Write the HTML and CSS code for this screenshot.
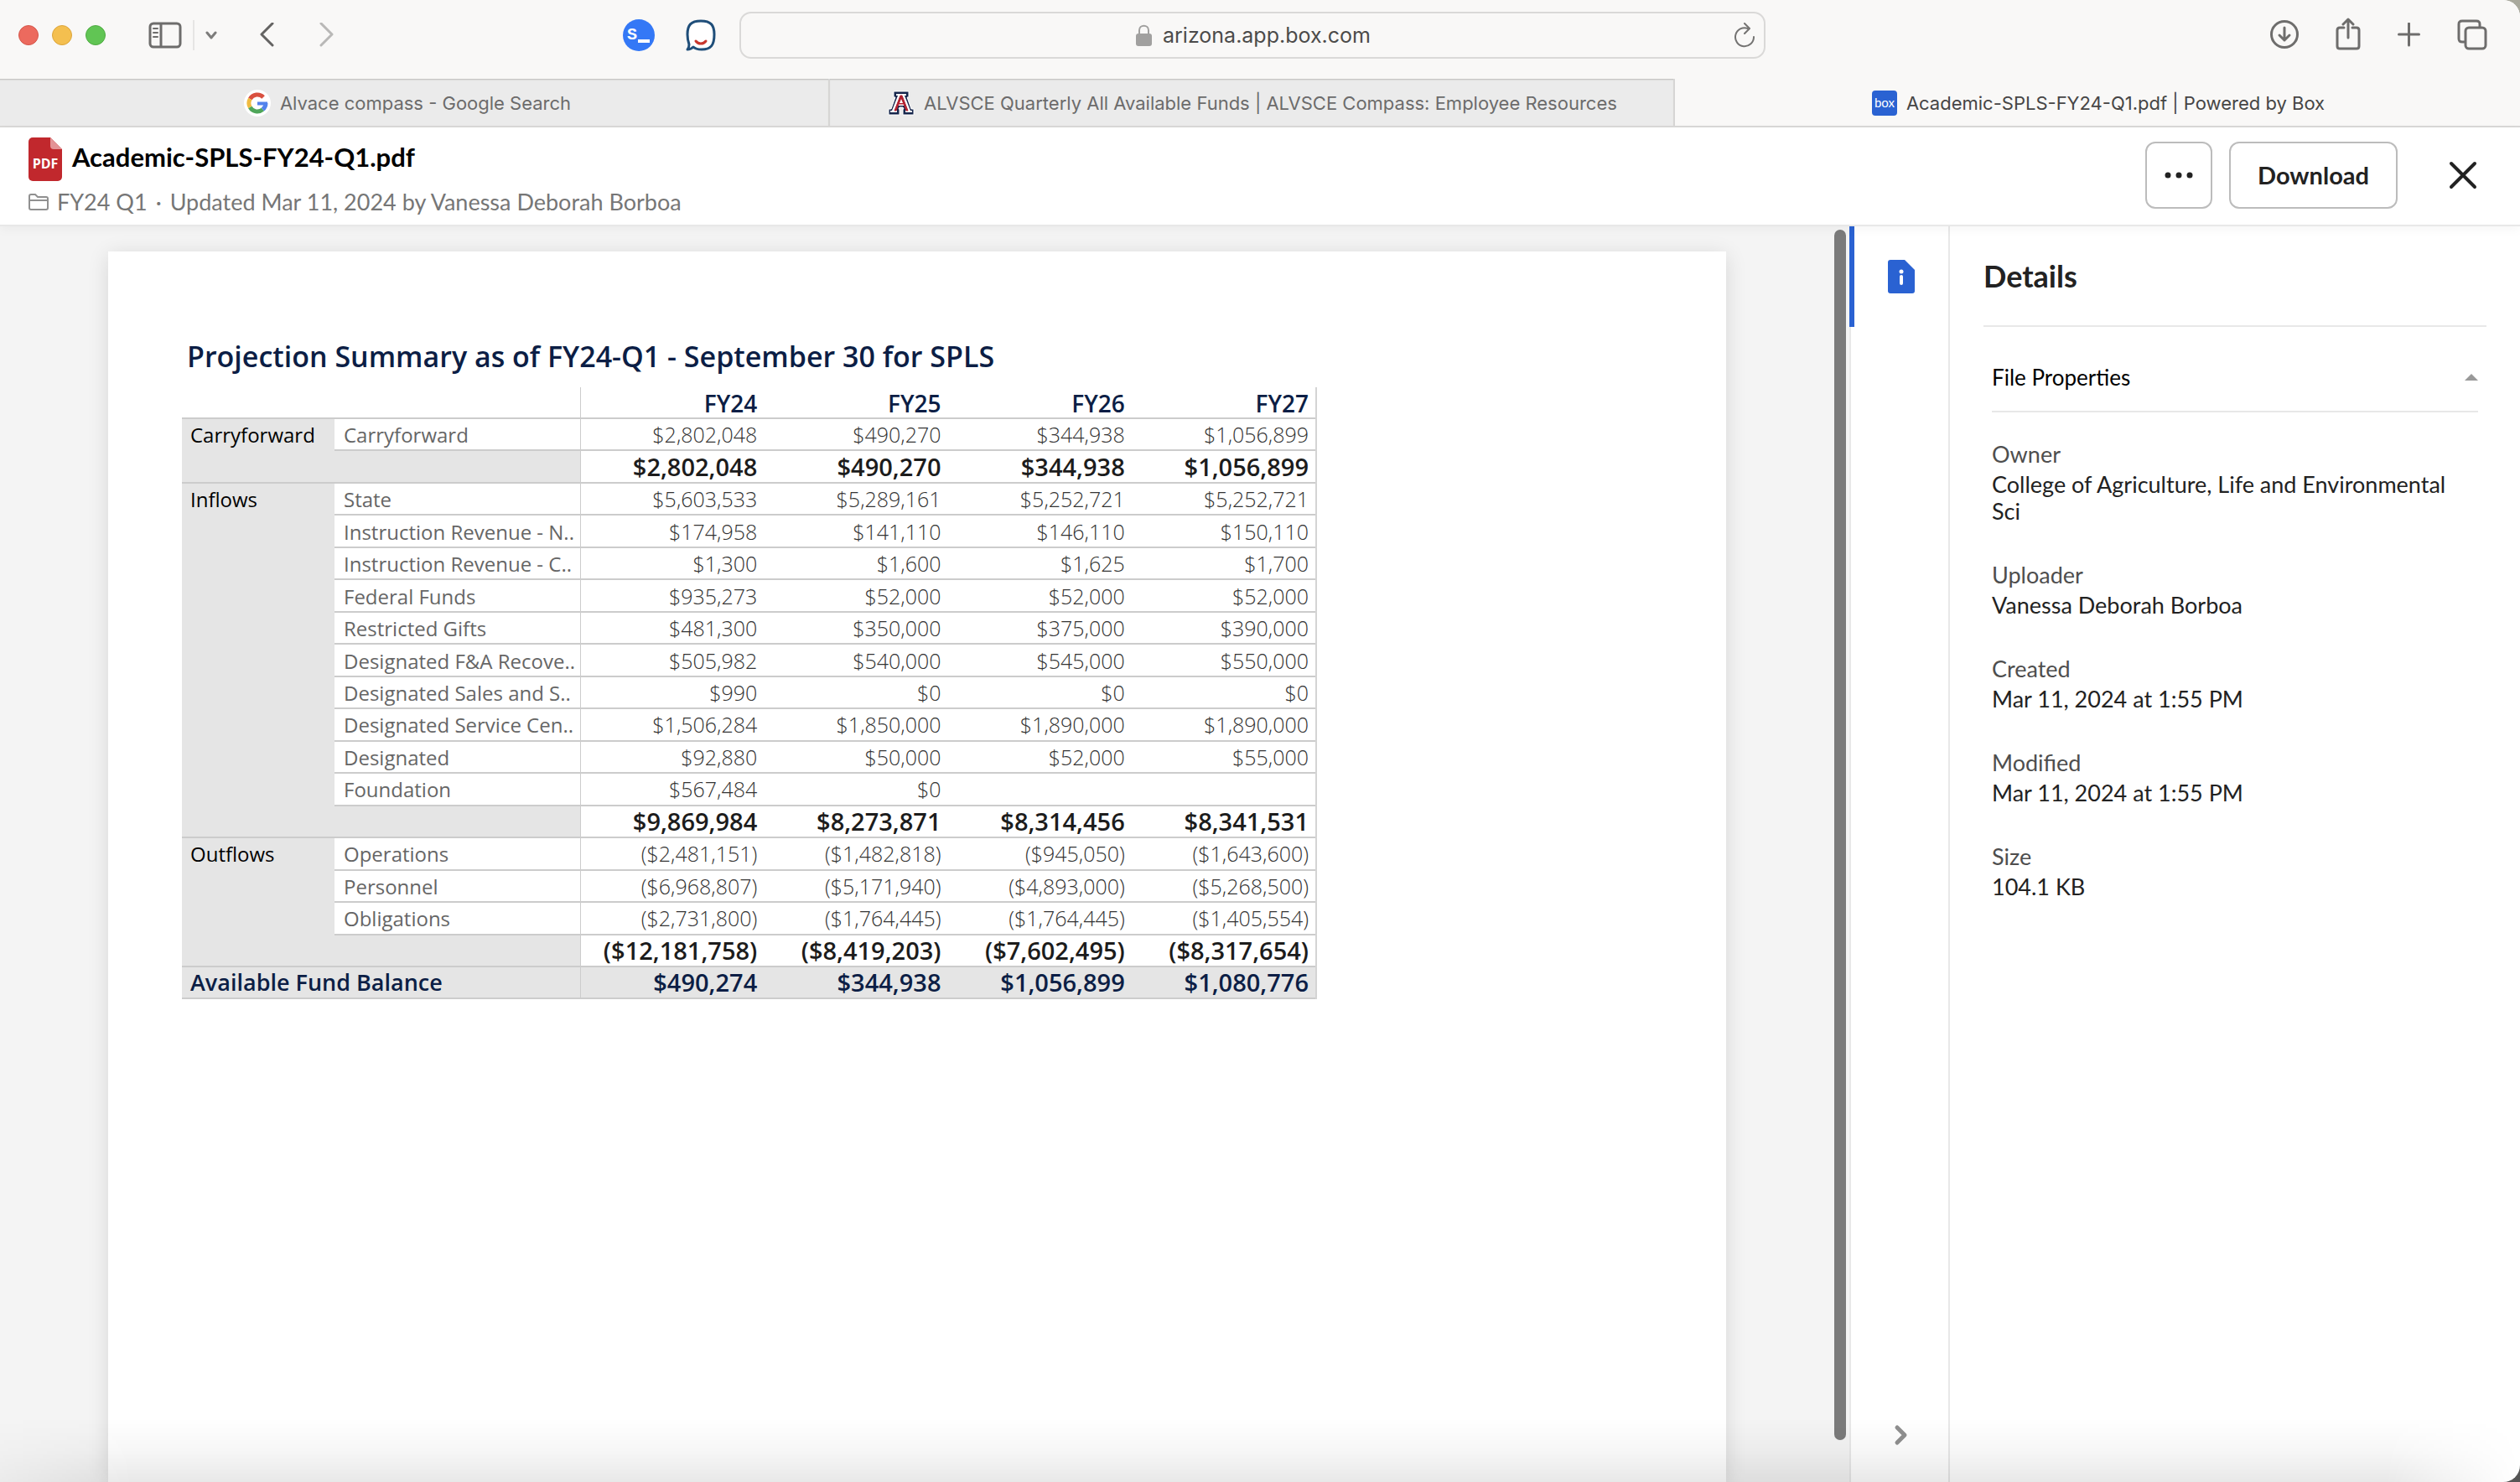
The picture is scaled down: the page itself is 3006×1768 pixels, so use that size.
FILE: index.html
```html
<!DOCTYPE html>
<html lang="en">
<head>
<meta charset="utf-8">
<title>Academic-SPLS-FY24-Q1.pdf | Powered by Box</title>
<link rel="stylesheet" href="styles.css">
</head>
<body>
<div class="window">
  <div class="toolbar">
    <div class="tools tools-left">
      <div class="lights"><span class="light red"></span><span class="light yellow"></span><span class="light green"></span></div>
      <button class="icon-btn sidebar-btn" aria-label="Show sidebar"><svg width="40" height="32" viewBox="0 0 40 32" fill="none" stroke="#6e6d6c" stroke-width="3"><rect x="2" y="2" width="36" height="28" rx="4"/><path d="M15 2v28"/><path d="M6 8h5M6 13h5M6 18h5" stroke-width="2" stroke-linecap="round"/></svg></button>
      <span class="divider"></span>
      <button class="icon-btn" aria-label="Tab groups"><svg width="14" height="10" viewBox="0 0 14 10" fill="none" stroke="#7d7c7b" stroke-width="3" stroke-linecap="round" stroke-linejoin="round"><path d="M2 2l5 6 5-6"/></svg></button>
      <button class="icon-btn back-btn" aria-label="Back"><svg width="18" height="30" viewBox="0 0 18 30" fill="none" stroke="#646362" stroke-width="3" stroke-linecap="round" stroke-linejoin="round"><path d="M16 1L3 14l13 13"/></svg></button>
      <button class="icon-btn forward-btn" aria-label="Forward"><svg width="18" height="30" viewBox="0 0 18 30" fill="none" stroke="#b9b8b7" stroke-width="3" stroke-linecap="round" stroke-linejoin="round"><path d="M2 1l13 13L2 27"/></svg></button>
      <button class="icon-btn ext-btn" aria-label="Scripts extension"><svg width="38" height="38" viewBox="0 0 38 38"><circle cx="19" cy="19" r="19" fill="#3478f6"/><text x="5" y="24" class="ext-text">S</text><rect x="18" y="24" width="14" height="4" fill="#fff"/></svg></button>
      <button class="icon-btn ghost-btn" aria-label="Chat extension"><svg width="36" height="38" viewBox="0 0 36 38" fill="none"><path d="M4 30C3 27 2 23 2 18C2 7 6 2 18 2s16 5 16 16c0 13-4 18-15 18-5 0-8-1-10-3-2 2-4 3-7 3 2-2 2-4 2-6z" fill="#fff" stroke="#1f4e79" stroke-width="3" stroke-linejoin="round"/><path d="M12 26c3 4 9 4 12 0" stroke="#c8372d" stroke-width="3" stroke-linecap="round"/></svg></button>
    </div>
    <form class="address">
      <span></span>
      <label class="address-label"><svg width="19" height="26" viewBox="0 0 19 26"><rect x="0" y="11" width="19" height="15" rx="3" fill="#a1a09f"/><path d="M4 12V7c0-7 11-7 11 0v5" fill="none" stroke="#a1a09f" stroke-width="2"/></svg><input class="address-input" type="text" value="arizona.app.box.com" aria-label="Address"></label>
      <button class="icon-btn reload-btn" type="button" aria-label="Reload"><svg width="24" height="30" viewBox="0 0 24 30" fill="none" stroke="#747372" stroke-width="2" stroke-linecap="round" stroke-linejoin="round"><path d="M16 7A11 11 0 1 0 23 17"/><path d="M12 1l6 6-6 6"/></svg></button>
    </form>
    <div class="tools tools-right">
      <button class="icon-btn" aria-label="Downloads"><svg width="34" height="36" viewBox="0 0 34 36" fill="none" stroke="#6e6d6c" stroke-width="3" stroke-linecap="round" stroke-linejoin="round"><circle cx="17" cy="17" r="15.500"/><path d="M17 9v15M11 18l6 6 6-6"/></svg></button>
      <button class="icon-btn" aria-label="Share"><svg width="30" height="42" viewBox="0 0 30 42" fill="none" stroke="#6e6d6c" stroke-width="3" stroke-linecap="round" stroke-linejoin="round"><path d="M10 12H5c-2 0-3 1-3 3v19c0 2 1 3 3 3h20c2 0 3-1 3-3V15c0-2-1-3-3-3h-5"/><path d="M15 24V2M9 8l6-6 6 6"/></svg></button>
      <button class="icon-btn" aria-label="New tab"><svg width="27" height="30" viewBox="0 0 27 30" fill="none" stroke="#6e6d6c" stroke-width="3" stroke-linecap="round"><path d="M13.500 1v26M1.500 14h24"/></svg></button>
      <button class="icon-btn" aria-label="Tab overview"><svg width="36" height="38" viewBox="0 0 36 38" fill="none" stroke="#6e6d6c" stroke-width="3" stroke-linejoin="round"><rect x="10" y="10" width="24" height="25" rx="4"/><path d="M10 27H6c-3 0-4-1-4-4V6c0-3 1-4 4-4h17c3 0 4 1 4 4v4"/></svg></button>
    </div>
  </div>
  <nav class="tabs">
    <a class="tab" href="#google"><svg width="32" height="32" viewBox="0 0 32 32"><circle cx="16" cy="16" r="16" fill="#fff"/><g fill="none" stroke-width="5"><path d="M23.100 8.900A10 10 0 0 0 7.300 11" stroke="#d9503f"/><path d="M7.300 11a10 10 0 0 0 0 10" stroke="#f0bb41"/><path d="M7.300 21a10 10 0 0 0 15.100 2.700" stroke="#4fa65a"/><path d="M22.400 23.700A10 10 0 0 0 26 16" stroke="#5383ec"/><path d="M16 16.500h12" stroke="#5383ec" stroke-width="4"/></g></svg><span>Alvace compass - Google Search</span></a>
    <a class="tab" href="#alvsce"><svg width="32" height="32" viewBox="0 0 32 32"><path d="M7 2h18v7h-2l5 14h3v7H18v-7h1l-1-2h-4l-1 2h1v7H1v-7h3L9 9H7z" fill="#16264c" stroke="#fff" stroke-width="1"/><path d="M10 5h12v2h-2l7 18h2v2h-8v-2h1l-2-6h-8l-2 6h1v2H3v-2h2L12 7h-2z" fill="#fff"/><path d="M15 7h2l7 18h-2l-3-8h-6l-3 8H8z" fill="#b1202f" stroke="#b1202f"/><path d="M16 11l2 5h-4z" fill="#fff"/></svg><span>ALVSCE Quarterly All Available Funds | ALVSCE Compass: Employee Resources</span></a>
    <a class="tab tab-active" href="#box" aria-current="page"><svg width="30" height="30" viewBox="0 0 30 30"><rect width="30" height="30" rx="4" fill="#2a62d2"/><text x="15" y="20" text-anchor="middle" class="box-text">box</text></svg><span>Academic-SPLS-FY24-Q1.pdf | Powered by Box</span></a>
  </nav>

  <header class="header">
    <div class="file">
      <h1 class="file-title"><svg width="40" height="52" viewBox="0 0 40 52"><path d="M5 0h21l14 14v33a5 5 0 0 1-5 5H5a5 5 0 0 1-5-5V5a5 5 0 0 1 5-5z" fill="#c1282d"/><path d="M26 0l14 14H30a4 4 0 0 1-4-4z" fill="#e39396"/><text x="20" y="37" text-anchor="middle" class="pdf-text">PDF</text></svg><span>Academic-SPLS-FY24-Q1.pdf</span></h1>
      <p class="file-meta"><svg width="24" height="20" viewBox="0 0 24 20" fill="none" stroke="#909090" stroke-width="2"><path d="M1 17V3c0-1 1-2 2-2h5l3 3h10c1 0 2 1 2 2v11c0 1-1 2-2 2H3c-1 0-2-1-2-2zM1 8h22"/></svg><span>FY24 Q1</span><span>·</span><span>Updated Mar 11, 2024 by Vanessa Deborah Borboa</span></p>
    </div>
    <div class="actions">
      <button class="btn btn-more" aria-label="More options"><svg width="34" height="8" viewBox="0 0 34 8" fill="#222"><circle cx="4" cy="4" r="3.500"/><circle cx="17" cy="4" r="3.500"/><circle cx="30" cy="4" r="3.500"/></svg></button>
      <button class="btn btn-download">Download</button>
      <button class="icon-btn close-btn" aria-label="Close"><svg width="34" height="34" viewBox="0 0 34 34" fill="none" stroke="#222" stroke-width="4" stroke-linecap="round"><path d="M3 3l28 28M31 3L3 31"/></svg></button>
    </div>
  </header>

  <div class="content">
    <main class="viewer">
      <article class="page">
        <h2 class="page-title">Projection Summary as of FY24-Q1 - September 30 for SPLS</h2>
        <table class="summary">
          <colgroup><col class="col-section"><col class="col-item"><col><col><col><col></colgroup>
          <thead>
            <tr><td colspan="2"></td><th scope="col">FY24</th><th scope="col">FY25</th><th scope="col">FY26</th><th scope="col">FY27</th></tr>
          </thead>
          <tbody>
            <tr><th class="section" scope="rowgroup" rowspan="2">Carryforward</th><th class="item" scope="row">Carryforward</th><td>$2,802,048</td><td>$490,270</td><td>$344,938</td><td>$1,056,899</td></tr>
            <tr class="total"><td class="blank"></td><td>$2,802,048</td><td>$490,270</td><td>$344,938</td><td>$1,056,899</td></tr>
          </tbody>
          <tbody>
            <tr><th class="section" scope="rowgroup" rowspan="11">Inflows</th><th class="item" scope="row">State</th><td>$5,603,533</td><td>$5,289,161</td><td>$5,252,721</td><td>$5,252,721</td></tr>
            <tr><th class="item" scope="row">Instruction Revenue - N..</th><td>$174,958</td><td>$141,110</td><td>$146,110</td><td>$150,110</td></tr>
            <tr><th class="item" scope="row">Instruction Revenue - C..</th><td>$1,300</td><td>$1,600</td><td>$1,625</td><td>$1,700</td></tr>
            <tr><th class="item" scope="row">Federal Funds</th><td>$935,273</td><td>$52,000</td><td>$52,000</td><td>$52,000</td></tr>
            <tr><th class="item" scope="row">Restricted Gifts</th><td>$481,300</td><td>$350,000</td><td>$375,000</td><td>$390,000</td></tr>
            <tr><th class="item" scope="row">Designated F&amp;A Recove..</th><td>$505,982</td><td>$540,000</td><td>$545,000</td><td>$550,000</td></tr>
            <tr><th class="item" scope="row">Designated Sales and S..</th><td>$990</td><td>$0</td><td>$0</td><td>$0</td></tr>
            <tr><th class="item" scope="row">Designated Service Cen..</th><td>$1,506,284</td><td>$1,850,000</td><td>$1,890,000</td><td>$1,890,000</td></tr>
            <tr><th class="item" scope="row">Designated</th><td>$92,880</td><td>$50,000</td><td>$52,000</td><td>$55,000</td></tr>
            <tr><th class="item" scope="row">Foundation</th><td>$567,484</td><td>$0</td><td></td><td></td></tr>
            <tr class="total"><td class="blank"></td><td>$9,869,984</td><td>$8,273,871</td><td>$8,314,456</td><td>$8,341,531</td></tr>
          </tbody>
          <tbody>
            <tr><th class="section" scope="rowgroup" rowspan="4">Outflows</th><th class="item" scope="row">Operations</th><td>($2,481,151)</td><td>($1,482,818)</td><td>($945,050)</td><td>($1,643,600)</td></tr>
            <tr><th class="item" scope="row">Personnel</th><td>($6,968,807)</td><td>($5,171,940)</td><td>($4,893,000)</td><td>($5,268,500)</td></tr>
            <tr><th class="item" scope="row">Obligations</th><td>($2,731,800)</td><td>($1,764,445)</td><td>($1,764,445)</td><td>($1,405,554)</td></tr>
            <tr class="total"><td class="blank"></td><td>($12,181,758)</td><td>($8,419,203)</td><td>($7,602,495)</td><td>($8,317,654)</td></tr>
          </tbody>
          <tfoot>
            <tr class="total balance"><th class="balance-label" scope="row" colspan="2">Available Fund Balance</th><td>$490,274</td><td>$344,938</td><td>$1,056,899</td><td>$1,080,776</td></tr>
          </tfoot>
        </table>
      </article>
      <div class="scroll-thumb"></div>
    </main>
    <div class="rail">
      <button class="rail-tab" aria-label="Details"><svg width="32" height="40" viewBox="0 0 32 40"><path d="M3 0h17l12 12v25a3 3 0 0 1-3 3H3a3 3 0 0 1-3-3V3a3 3 0 0 1 3-3z" fill="#2a62d2"/><circle cx="16" cy="14" r="2.500" fill="#fff"/><path d="M16 20v8" stroke="#fff" stroke-width="4" stroke-linecap="round"/></svg></button>
      <button class="rail-toggle" aria-label="Collapse sidebar"><svg width="18" height="26" viewBox="0 0 18 26" fill="none" stroke="#909090" stroke-width="5" stroke-linejoin="round" stroke-linecap="round"><path d="M4 4l9 9-9 9"/></svg></button>
    </div>
    <aside class="details">
      <h2 class="details-title">Details</h2>
      <section class="properties">
        <button class="properties-toggle" aria-expanded="true"><span>File Properties</span><svg width="16" height="8" viewBox="0 0 16 8"><path d="M8 0l8 8H0z" fill="#999"/></svg></button>
        <dl class="property-list">
          <div><dt>Owner</dt><dd>College of Agriculture, Life and Environmental Sci</dd></div>
          <div><dt>Uploader</dt><dd>Vanessa Deborah Borboa</dd></div>
          <div><dt>Created</dt><dd>Mar 11, 2024 at 1:55 PM</dd></div>
          <div><dt>Modified</dt><dd>Mar 11, 2024 at 1:55 PM</dd></div>
          <div><dt>Size</dt><dd>104.1 KB</dd></div>
        </dl>
      </section>
    </aside>
  </div>
  <div class="bottom-shade"></div>
</div>
</body>
</html>
```
FILE: styles.css
```css
* { box-sizing: border-box; }

body {
  margin: 0;
  background: linear-gradient(#a9a99d, #555);
  font-family: "Lato", sans-serif;
  color: #222;
}

h1, h2, p, dl, dd { margin: 0; }

button { font: inherit; color: inherit; }
svg { display: block; flex: none; }

.window {
  display: flex;
  flex-direction: column;
  min-height: 100vh;
  position: relative;
  overflow: hidden;
  background: #fff;
  border-radius: 0 20px 20px 0;
}

.icon-btn {
  padding: 0;
  border: 0;
  background: none;
}

/* Browser toolbar */
.toolbar {
  display: grid;
  grid-template-columns: 882fr 1224fr 900fr;
  align-items: center;
  padding: 14px 0 24px;
  background: #f9f8f7;
}

.tools { display: flex; align-items: center; }
.tools-left { padding: 0 28px 0 22px; }
.tools-right { justify-content: flex-end; gap: 44px; padding-right: 39px; }

.lights { display: flex; gap: 16px; }
.light { width: 24px; height: 24px; border-radius: 50%; border: 1px solid; }
.red { background: #ec6a5e; border-color: #d5564a; }
.yellow { background: #f4bf4f; border-color: #dca53b; }
.green { background: #61c554; border-color: #4fab42; }

.sidebar-btn { margin-left: 51px; }
.divider { width: 2px; height: 36px; margin: 0 13px; background: #e6e5e4; }
.back-btn { margin-left: 50px; }
.forward-btn { margin-left: 54px; }
.ext-btn { margin-left: auto; }
.ghost-btn { margin-left: 37px; }
.ext-text { font: 700 20px "Liberation Mono", monospace; fill: #fff; }

.address {
  display: grid;
  grid-template-columns: 1fr auto 1fr;
  align-items: center;
  height: 56px;
  padding-left: 6px;
  border: 2px solid #dad9d8;
  border-radius: 14px;
}
.address-label { display: flex; align-items: center; gap: 13px; }
.address-input {
  width: 252px;
  field-sizing: content;
  padding: 0;
  border: 0;
  background: none;
  font: 400 25px/32px "Inter", sans-serif;
  color: #4c4b4a;
}
.reload-btn { justify-self: end; margin-right: 11px; }

/* Tab strip */
.tabs {
  display: grid;
  grid-template-columns: repeat(3, 1fr);
  margin-left: -18px;
  border-bottom: 2px solid #d9d8d7;
  background: #f9f8f7;
}
.tab {
  display: flex;
  align-items: center;
  justify-content: center;
  gap: 11px;
  height: 56px;
  padding: 2px 0 0 2px;
  border-right: 2px solid #d6d5d4;
  background: #ebebeb;
  box-shadow: inset 0 2px 2px -1px #b9b8b6;
  font: 400 22px/28px "Inter", sans-serif;
  color: #6c6b6b;
  text-decoration: none;
}
.tab-active {
  border-right: 0;
  background: none;
  box-shadow: none;
  color: #464545;
}
.box-text { font: 400 15px "Lato", sans-serif; fill: #fff; }

/* File header */
.header {
  display: flex;
  justify-content: space-between;
  align-items: center;
  padding: 12px 51px 11px 34px;
  border-bottom: 2px solid #e8e8e8;
  position: relative;
  box-shadow: 0 4px 12px rgba(0, 0, 0, 0.04);
  z-index: 1;
}
.file { display: grid; gap: 9px; }
.file-title {
  display: flex;
  gap: 12px;
  font-size: 31px;
  line-height: 46px;
  font-weight: 700;
  color: #000;
}
.pdf-text { font: 700 16px "Open Sans", sans-serif; fill: #fff; }
.file-meta {
  display: flex;
  align-items: center;
  gap: 10px;
  font-size: 27px;
  line-height: 32px;
  color: #767676;
}
.actions { display: flex; align-items: center; gap: 20px; padding-bottom: 4px; }
.btn {
  display: grid;
  place-items: center;
  height: 80px;
  border: 2px solid #bcbcbc;
  border-radius: 12px;
  background: #fff;
  font-size: 29px;
  font-weight: 700;
}
.btn-more { width: 80px; padding: 0; }
.btn-download { padding: 0 32px; }
.close-btn { margin-left: 41px; }

/* Document viewer */
.content { display: flex; flex: 1; }
.viewer {
  position: relative;
  flex: 1;
  display: flex;
  padding: 30px 147px 0 129px;
  background: #f4f4f4;
}
.page {
  flex: 1;
  padding: 101px 88px 0;
  background: #fff;
  box-shadow: 0 4px 24px rgba(0, 0, 0, 0.12);
  font-family: "Open Sans", sans-serif;
}
.scroll-thumb {
  position: absolute;
  top: 4px;
  right: 4px;
  bottom: 50px;
  width: 14px;
  border-radius: 7px;
  background: #7b7b7b;
}
.page-title {
  margin-bottom: 13px;
  padding-left: 6px;
  font-size: 34px;
  line-height: 48px;
  font-weight: 600;
  color: #0c1e45;
}

.summary {
  width: 1354px;
  height: 730px;
  table-layout: fixed;
  border-collapse: separate;
  border-spacing: 0;
  border-right: 2px solid #d4d4d4;
  font-size: 25px;
  line-height: 34px;
}
.col-section { width: 182px; }
.col-item { width: 293px; }
.summary th, .summary td {
  height: 38px;
  padding: 0 8px 0 0;
  border-bottom: 2px solid #ccc;
  text-align: right;
  white-space: nowrap;
}
.summary td { font-weight: 300; color: #333; }
.summary td:nth-last-child(4), .summary thead th:nth-last-child(4) { border-left: 1px solid #ccc; }
.summary thead th { padding-top: 2px; font-size: 28px; font-weight: 600; color: #0c1e45; }
.summary .section {
  padding: 2px 0 0 10px;
  vertical-align: top;
  text-align: left;
  font-size: 24px;
  font-weight: 500;
  background: #e5e5e5;
  color: #000;
}
.summary .item {
  padding: 2px 0 0 11px;
  text-align: left;
  font-size: 24px;
  font-weight: 400;
  color: #666;
}
.summary .blank { background: #e5e5e5; }
.summary .total td { font-size: 29px; font-weight: 600; color: #1c1c1c; }
.summary .balance th, .summary .balance td { background: #e5e5e5; color: #0c1e45; }
.summary .balance .balance-label {
  padding-left: 10px;
  text-align: left;
  font-size: 27px;
  font-weight: 600;
}

/* Sidebar */
.rail {
  display: flex;
  flex-direction: column;
  justify-content: space-between;
  width: 120px;
  padding-bottom: 36px;
  border-right: 2px solid #e8e8e8;
  background: #fff;
  box-shadow: inset 2px 0 #e8e8e8;
}
.rail-tab {
  display: grid;
  place-items: center;
  height: 120px;
  padding: 0;
  border: 0;
  border-left: 6px solid #2a62d2;
  background: none;
}
.rail-toggle {
  display: grid;
  place-items: center;
  height: 40px;
  padding: 0 0 0 6px;
  border: 0;
  background: none;
}
.details { width: 680px; padding: 0 40px; }
.details-title {
  border-bottom: 2px solid #e8e8e8;
  font-size: 36px;
  line-height: 118px;
  font-weight: 700;
}
.properties { padding: 20px 10px 0; }
.properties-toggle {
  display: flex;
  justify-content: space-between;
  align-items: center;
  width: 100%;
  height: 82px;
  padding: 0;
  border: 0;
  border-bottom: 2px solid #e8e8e8;
  background: none;
  font-size: 26px;
  color: #000;
}
.property-list {
  display: grid;
  gap: 42px;
  padding-top: 32px;
  font-size: 27px;
}
.property-list dt { margin-bottom: 2px; line-height: 36px; color: #4e4e4e; }
.property-list dd { line-height: 32px; }

.bottom-shade {
  position: absolute;
  inset: auto 0 0;
  height: 76px;
  z-index: 2;
  pointer-events: none;
  background: linear-gradient(transparent, rgba(0, 0, 0, 0.03) 50%, rgba(0, 0, 0, 0.09));
  mask-image: linear-gradient(to right, rgba(0, 0, 0, 0.4), #000 160px, #000 calc(100% - 160px), transparent);
}
```
